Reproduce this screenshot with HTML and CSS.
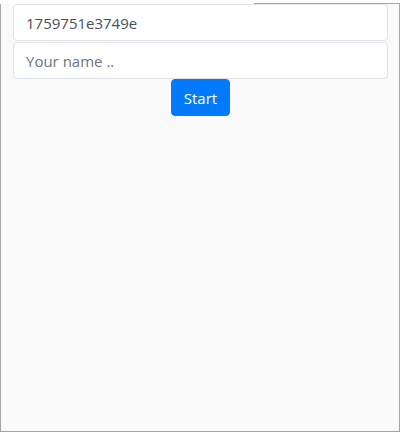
FILE: index.html
```html
<!DOCTYPE html>
<html>
<head>
<meta charset="utf-8">
<link rel="stylesheet" href="styles.css">
</head>
<body>
<div class="frame">
  <div class="tab"></div>
  <div class="content">
    <input class="field" type="text" value="1759751e3749e">
    <input class="field second" type="text" placeholder="Your name ..">
    <div class="actions"><button class="btn">Start</button></div>
  </div>
</div>
</body>
</html>
```
FILE: styles.css
```css
html, body {
  margin: 0;
  padding: 0;
  background: #ffffff;
}
body {
  width: 400px;
  height: 432px;
  overflow: hidden;
  font-family: "Open Sans", "Noto Sans", sans-serif;
}
.frame {
  position: relative;
  box-sizing: border-box;
  margin-top: 3px;
  height: 429px;
  border: 1px solid #a6a6a6;
  background: #fafafa;
}
.tab {
  position: absolute;
  left: -1px;
  top: -4px;
  width: 254px;
  height: 4px;
  background: #ffffff;
}
.content {
  display: flex;
  flex-direction: column;
  padding: 0 11px 0 12px;
}
.field {
  box-sizing: border-box;
  display: block;
  width: 100%;
  height: 37px;
  margin: 0;
  padding: 0 12px;
  font-family: inherit;
  font-size: 15px;
  color: #495057;
  background: #ffffff;
  border: 1px solid #dfe2e6;
  border-radius: 4px;
  outline: none;
}
.field::placeholder {
  color: #6c757d;
  opacity: 1;
}
.second {
  margin-top: 1px;
}
.actions {
  display: flex;
  justify-content: center;
}
.btn {
  box-sizing: border-box;
  height: 37px;
  padding: 0 12px;
  font-family: inherit;
  font-size: 15px;
  color: #ffffff;
  background: #007bff;
  border: 1px solid #007bff;
  border-radius: 4px;
}
```
